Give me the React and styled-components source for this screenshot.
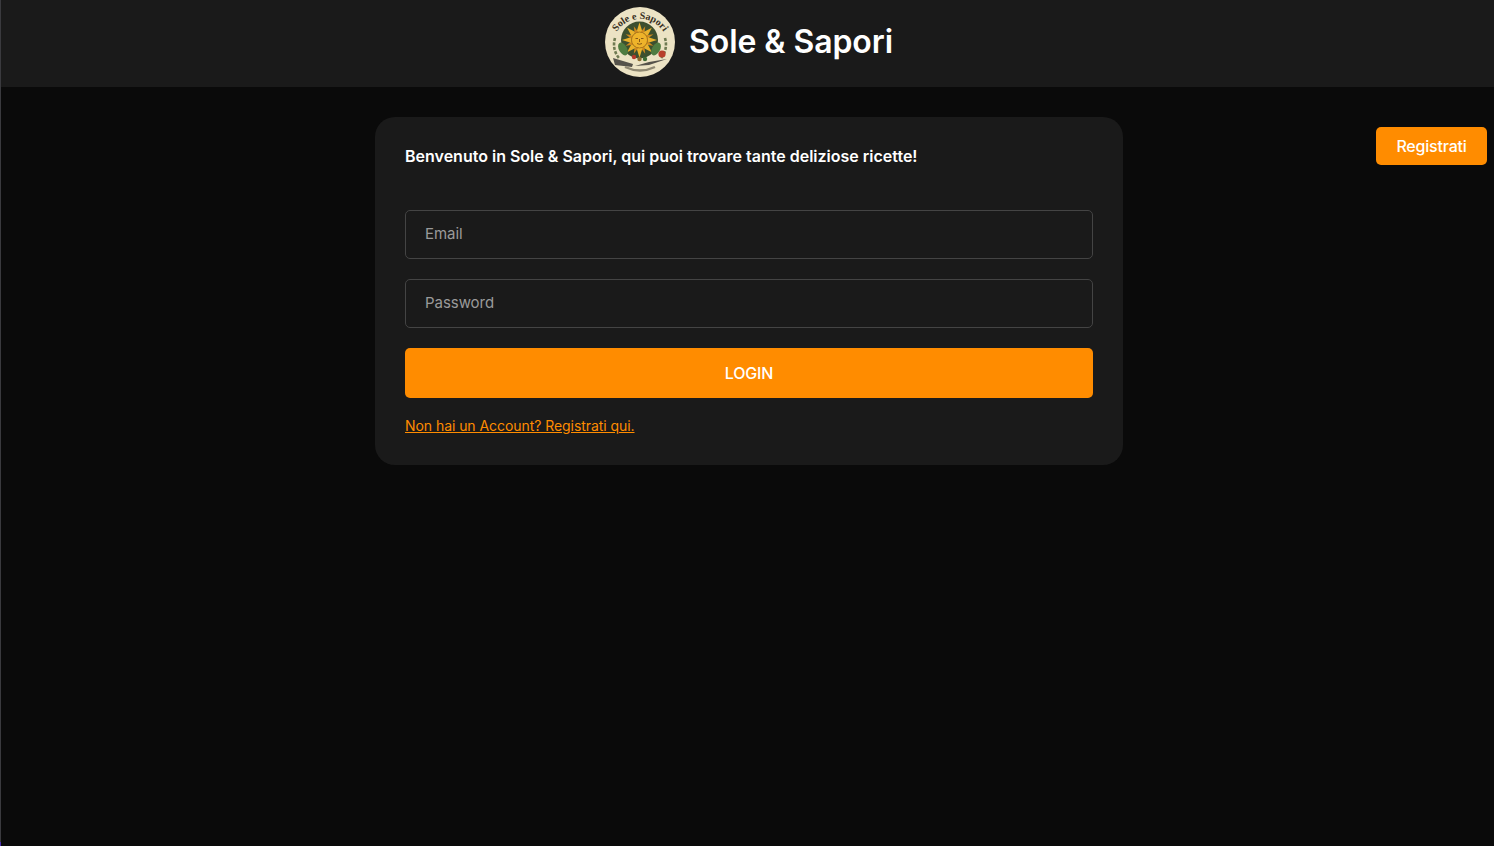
import React from "react";
import styled, { createGlobalStyle } from "styled-components";

const GlobalStyle = createGlobalStyle`
  * { box-sizing: border-box; }
  html, body { margin: 0; height: 100%; background: #0a0a0a; }
  body { font-family: "Inter", "Roboto", sans-serif; color: #fff; overflow: hidden; }
`;

const Page = styled.div`
  height: 846px;
  background: #0a0a0a;
  border-left: 1px solid #3a3a3e;
  border-image: linear-gradient(#3a3a3e 99.4%, #4a2fb0 99.4%) 1;
`;

const Header = styled.header`
  height: 87px;
  background: #1a1a1a;
  padding: 0 0 3px 3px;
  display: flex;
  align-items: center;
  justify-content: center;
  gap: 14px;
`;

const LogoWrap = styled.div`
  width: 70px;
  height: 70px;
  flex: none;
`;

const Brand = styled.h1`
  margin: 0;
  font-size: 32px;
  font-weight: 600;
  line-height: 40px;
  letter-spacing: -0.08px;
`;

const Main = styled.main`
  display: grid;
  grid-template-columns: 1fr 748px 1fr;
  padding: 30px 0 0 3px;
  align-items: start;
`;

const Card = styled.section`
  grid-column: 2;
  background: #1a1a1a;
  border-radius: 20px;
  padding: 30px;
  height: 348px;
`;

const Welcome = styled.h2`
  margin: 0 0 44px;
  font-size: 16px;
  line-height: 19px;
  font-weight: 600;
`;

const Field = styled.input`
  display: block;
  width: 100%;
  height: 49px;
  margin-bottom: 20px;
  padding: 0 19px 2px;
  background: #1a1a1a;
  border: 1px solid #444;
  border-radius: 5px;
  color: #fff;
  font: 400 15px "Inter", sans-serif;
  letter-spacing: -0.05px;
  outline: none;
  &::placeholder { color: #9a9a9a; opacity: 1; }
`;

const Button = styled.button`
  background: #ff8c00;
  color: #fff;
  border: 0;
  border-radius: 5px;
  font-family: "Inter", sans-serif;
  font-weight: 500;
  font-size: 16px;
  width: ${(p) => (p.$wide ? "100%" : "111px")};
  height: ${(p) => (p.$wide ? "50px" : "38px")};
  letter-spacing: -0.2px;
`;

const SideAction = styled.div`
  grid-column: 3;
  justify-self: end;
  margin: 10px 7px 0 0;
`;

const Hint = styled.a`
  display: inline-block;
  margin-top: 19px;
  color: #ff8c00;
  font-size: 14px;
  line-height: 18px;
  letter-spacing: -0.06px;
  text-decoration: underline;
`;

const rays = Array.from({ length: 16 }, (_, i) => i * 22.5);

const Logo = () => (
  <svg viewBox="0 0 70 70" width="70" height="70">
    <defs>
      <path id="arc" d="M7 40 A28 28 0 0 1 63 40" />
    </defs>
    <circle cx="35" cy="35" r="35" fill="#ece3c4" />
    <text fontFamily="Liberation Serif, serif" fontSize="10" fontWeight="700" fill="#38301f">
      <textPath href="#arc" startOffset="50%" textAnchor="middle">Sole e Sapori</textPath>
    </text>
    <path d="M10 31 C8 38 9 45 14 51" fill="none" stroke="#6f7a52" strokeWidth="2.6" strokeDasharray="3 1.5" />
    <path d="M60 31 C62 38 61 45 56 51" fill="none" stroke="#6f7a52" strokeWidth="2.6" strokeDasharray="3 1.5" />
    <circle cx="34.5" cy="33" r="18.5" fill="#3d4f2e" />
    {rays.map((a, i) => (
      <path
        key={a}
        d={i % 2 ? "M32.6 25 L34.5 18 L36.4 25 Z" : "M31.5 25 L34.5 15.5 L37.5 25 Z"}
        fill={i % 2 ? "#cf8a1e" : "#eab22c"}
        transform={`rotate(${a} 34.5 33)`}
      />
    ))}
    <circle cx="34.5" cy="33" r="8" fill="#eeb32a" stroke="#a96f18" strokeWidth="0.8" />
    <path d="M30.5 31.5h2.5M36 31.5h2.5M34.5 32v3M32 36.5 Q34.5 38 37 36.5" fill="none" stroke="#7c4f14" strokeWidth="0.9" />
    <ellipse cx="18" cy="42" rx="4" ry="7" fill="#4f7c40" transform="rotate(-30 18 42)" />
    <ellipse cx="51" cy="42" rx="4" ry="7" fill="#4f7c40" transform="rotate(30 51 42)" />
    <circle cx="29" cy="50" r="2.2" fill="#b5392a" />
    <circle cx="40" cy="52" r="2.2" fill="#3d6a34" />
    <circle cx="34.5" cy="52" r="2.2" fill="#8a6b2e" />
    <circle cx="57" cy="47" r="3.6" fill="#b83f2b" />
    <path d="M8 51 L28 57 L27 60 L10 58 Z" fill="#55524a" />
    <path d="M62 52 L44 58 L30 59 L44 55 Z" fill="#55524a" />
    <path d="M20 60 Q35 67 50 60" fill="none" stroke="#8f8872" strokeWidth="2.4" />
  </svg>
);

export default function App() {
  return (
    <>
      <GlobalStyle />
      <Page>
        <Header>
          <LogoWrap><Logo /></LogoWrap>
          <Brand>Sole &amp; Sapori</Brand>
        </Header>
        <Main>
          <Card>
            <Welcome>Benvenuto in Sole &amp; Sapori, qui puoi trovare tante deliziose ricette!</Welcome>
            <Field type="email" placeholder="Email" />
            <Field type="password" placeholder="Password" />
            <Button $wide>LOGIN</Button>
            <Hint href="#">Non hai un Account? Registrati qui.</Hint>
          </Card>
          <SideAction>
            <Button>Registrati</Button>
          </SideAction>
        </Main>
      </Page>
    </>
  );
}
